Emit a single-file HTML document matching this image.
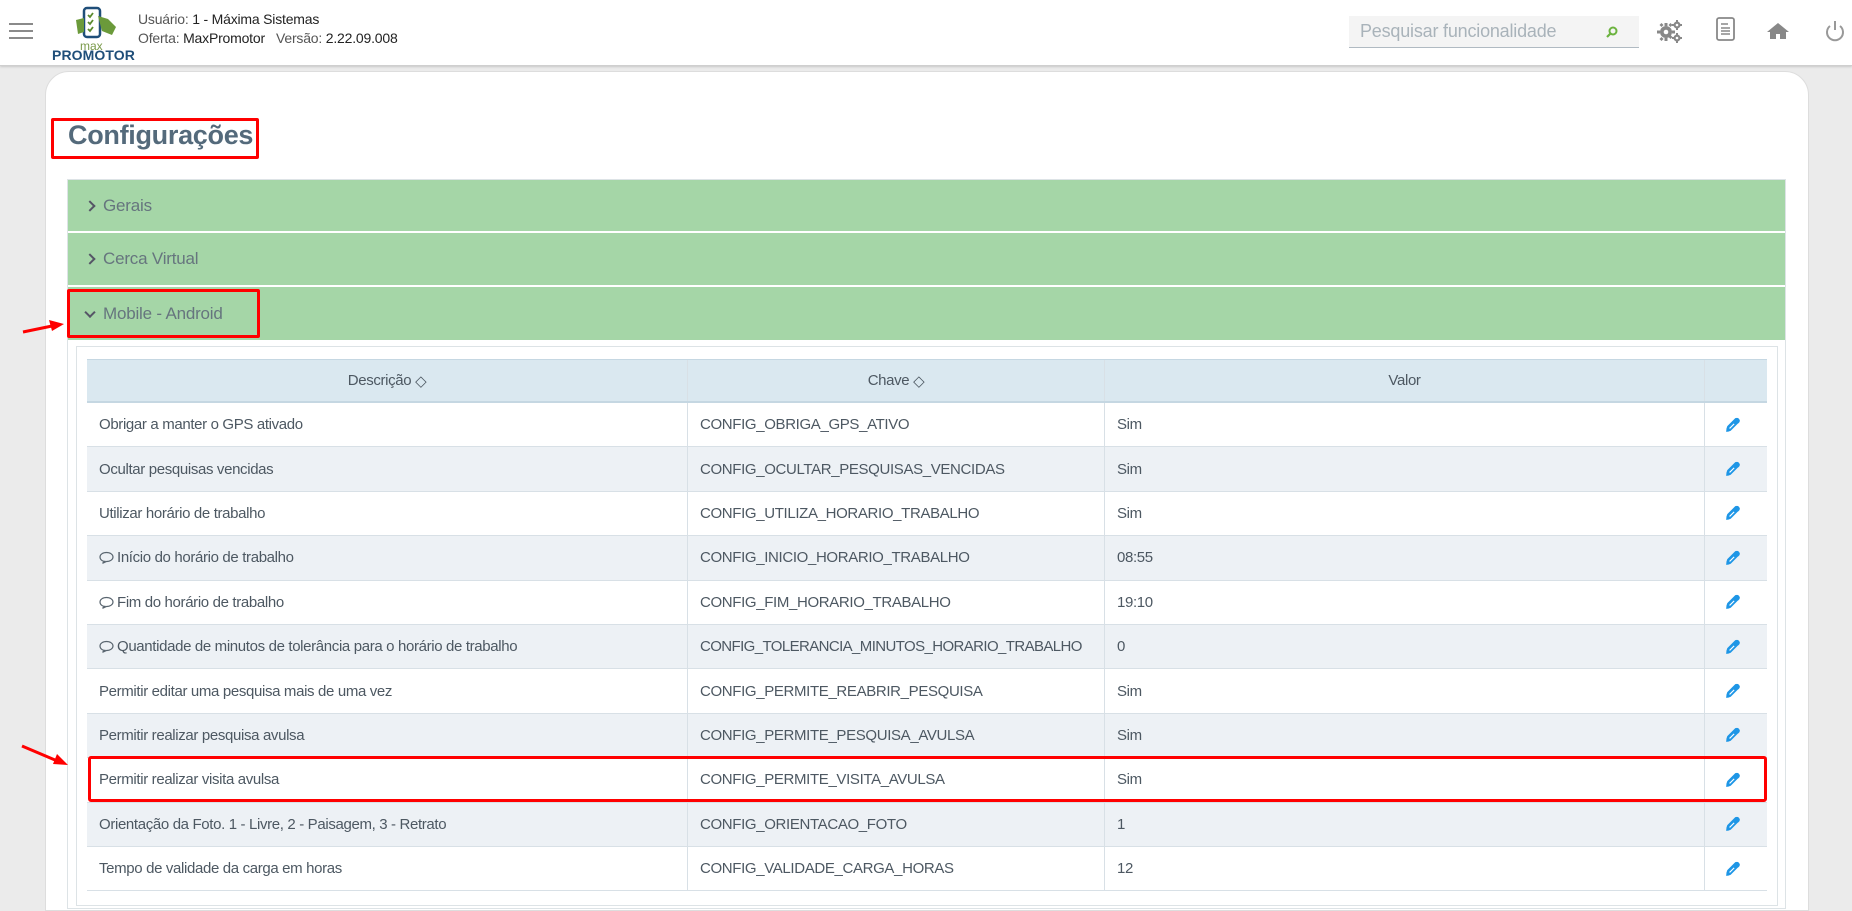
<!DOCTYPE html>
<html><head><meta charset="utf-8"><style>
*{box-sizing:border-box;margin:0;padding:0}
body{width:1852px;height:890px;overflow:hidden;background:#ebebeb;font-family:"Liberation Sans",sans-serif;position:relative;color:#4f5a63}
.abs{position:absolute}
#hdr{left:0;top:0;width:1852px;height:66px;background:#fff;border-bottom:1px solid #cfcfcf;box-shadow:0 1px 2px rgba(0,0,0,.15)}
.ham{left:9px;width:24px;height:2px;background:#8a8a8a}
.ht{font-size:14px;color:#555;left:138px;letter-spacing:-.2px}
.ht b{font-weight:normal;color:#222}
#card{left:45px;top:71px;width:1764px;height:840px;background:#fff;border-radius:24px 24px 0 0;border:1px solid #ddd}
.grow{left:68px;width:1717px;background:#a5d6a7;font-size:17px;color:#66757e;padding-left:35px;display:flex;align-items:center;letter-spacing:-.2px}
.chev{position:absolute;left:18px;top:50%;width:8px;height:8px;border-right:2px solid #556;border-bottom:2px solid #556}
.row{position:absolute;left:87px;width:1680px;height:44.4px;border-bottom:1px solid #d8e0e6;font-size:15px;letter-spacing:-.35px;color:#4d5862}
.row div{position:absolute;top:0;height:100%;display:flex;align-items:center;padding-left:12px;border-right:1px solid #d8e0e6;white-space:nowrap}
.c1{left:0;width:601px}.c2{left:601px;width:417px}.c3{left:1018px;width:600px}.c4{left:1618px;width:62px;border-right:none!important}
.odd{background:#edf1f5}
.hd{background:#dae8f0;border-bottom:2px solid #c5d7e2;color:#4d5862}
.hd div{justify-content:center;padding-left:0}
.bub{width:15px;height:13px;margin-right:3px}
.c4 svg{width:16px;height:16px;margin-left:8px}
</style></head><body>
<div id="hdr" class="abs">
<div class="abs ham" style="top:23px"></div><div class="abs ham" style="top:30px"></div><div class="abs ham" style="top:37px"></div>
<svg class="abs" style="left:68px;top:6px" width="56" height="36" viewBox="0 0 56 36"><rect x="16" y="2" width="16" height="29" rx="3" fill="none" stroke="#1f4e79" stroke-width="2.5"/><path d="M20 9l2 2 3-4M20 16l2 2 3-4M20 23l2 2 3-4" stroke="#5a8a2e" stroke-width="1.8" fill="none"/><path d="M30 10 l10 3 8 8 -4 8 -10 -4z" fill="#6b9a3a"/><path d="M8 14 l8 -2 v14 l-6 2z" fill="#6b9a3a"/></svg>
<div class="abs" style="left:80px;top:41px;font-size:12px;color:#7a9a4a;line-height:11px">max</div>
<div class="abs" style="left:52px;top:49px;font-size:14px;font-weight:bold;color:#1f4e79;line-height:13px;letter-spacing:.1px">PROMOTOR</div>
<div class="abs ht" style="top:11px">Usuário: <b>1 - Máxima Sistemas</b></div>
<div class="abs ht" style="top:30px">Oferta: <b>MaxPromotor</b> &nbsp;&nbsp;Versão: <b>2.22.09.008</b></div>
<div class="abs" style="left:1349px;top:16px;width:290px;height:32px;background:#f4f4f4;border-bottom:1px solid #b0bac2;font-size:18px;color:#a9b3ba;padding:5px 0 0 11px;letter-spacing:-.2px">Pesquisar funcionalidade</div>
<svg class="abs" style="left:1606px;top:26px" width="12" height="12"><circle cx="7" cy="5" r="3.5" fill="none" stroke="#6cb33f" stroke-width="2"/><path d="M4.5 7.5 L1 11" stroke="#6cb33f" stroke-width="2.2"/></svg>
<svg class="abs" style="left:1656px;top:19px" width="28" height="24" viewBox="0 0 28 24"><g fill="#888"><circle cx="10" cy="13" r="6"/><path d="M8.5 4h3v3h-3zM8.5 19h3v3h-3zM1 11.5h3v3H1zM16 11.5h3v3h-3zM3.5 6l2-2 2 2-2 2zM12.5 18l2-2 2 2-2 2zM3.5 20l2 2 2-2-2-2zM12.5 6l2 2 2-2-2-2z"/><circle cx="21" cy="6" r="3.5"/><circle cx="21" cy="19" r="3.5"/><path d="M20 1h2v2h-2zM20 9h2v2h-2zM16 5h2v2h-2zM24 5h2v2h-2zM20 14h2v2h-2zM20 22h2v2h-2zM16 18h2v2h-2zM24 18h2v2h-2z"/></g><circle cx="10" cy="13" r="2.3" fill="#fff"/><circle cx="21" cy="6" r="1.3" fill="#fff"/><circle cx="21" cy="19" r="1.3" fill="#fff"/></svg>
<svg class="abs" style="left:1716px;top:17px" width="20" height="24"><rect x="1" y="1" width="17" height="22" rx="2" fill="none" stroke="#888" stroke-width="1.8"/><path d="M5 7h7M5 11h9M5 14h9M5 17h9" stroke="#888" stroke-width="1.5"/></svg>
<svg class="abs" style="left:1766px;top:22px" width="24" height="18"><path d="M12 1 L23 10 H20 V17 H14 V12 H10 V17 H4 V10 H1z" fill="#888"/></svg>
<svg class="abs" style="left:1824px;top:20px" width="22" height="22"><path d="M6 6 A8 8 0 1 0 16 6" fill="none" stroke="#999" stroke-width="2"/><path d="M11 1 V10" stroke="#999" stroke-width="2"/></svg>
</div>
<div id="card" class="abs"></div>
<div class="abs" style="left:68px;top:120px;font-size:27px;font-weight:bold;color:#546a7b;letter-spacing:-.3px">Configurações</div>
<div class="abs" style="left:51px;top:118px;width:208px;height:41px;border:3px solid #f00;border-radius:2px"></div>
<div class="abs" style="left:67px;top:179px;width:1719px;height:730px;border:1px solid #dde3e6"></div>
<div class="abs grow" style="top:180px;height:51px"><span class="chev" style="transform:translateY(-50%) rotate(-45deg)"></span>Gerais</div>
<div class="abs grow" style="top:233px;height:52px"><span class="chev" style="transform:translateY(-50%) rotate(-45deg)"></span>Cerca Virtual</div>
<div class="abs grow" style="top:287px;height:53px"><span class="chev" style="transform:translateY(-70%) rotate(45deg)"></span>Mobile - Android</div>
<div class="abs" style="left:67px;top:289px;width:193px;height:49px;border:3px solid #f00;border-radius:2px"></div>
<div class="abs" style="left:76px;top:346px;width:1702px;height:560px;border:1px solid #dde3e6"></div>
<div class="row hd" style="top:359px;height:44px;border-top:1px solid #c5d7e2"><div class="c1">Descrição&nbsp;<span style="font-size:15px">◇</span></div><div class="c2">Chave&nbsp;<span style="font-size:15px">◇</span></div><div class="c3">Valor</div><div class="c4"></div></div>
<svg width="0" height="0" style="position:absolute"><defs><symbol id="b" viewBox="0 0 15 13"><path d="M7.5 1.5C3.8 1.5 1 3.5 1 6s2.2 4.2 4.5 4.4L3.5 12.3 7.5 10.5c3.7 0 6.5-2 6.5-4.5S11.2 1.5 7.5 1.5z" fill="none" stroke="#5a6670" stroke-width="1.2"/></symbol><symbol id="p" viewBox="0 0 14 14"><path d="M9 1 Q12 0 13 3 Q13 5 11 6 L5 12 Q3 13 1 13 Q1 10 2 8z" fill="#1e96e6"/><path d="M4 10l4-4" stroke="#fff" stroke-width="1"/></symbol></defs></svg>
<div class="row" style="top:403px"><div class="c1">Obrigar a manter o GPS ativado</div><div class="c2">CONFIG_OBRIGA_GPS_ATIVO</div><div class="c3">Sim</div><div class="c4"><svg><use href="#p"/></svg></div></div>
<div class="row odd" style="top:447.4px"><div class="c1">Ocultar pesquisas vencidas</div><div class="c2">CONFIG_OCULTAR_PESQUISAS_VENCIDAS</div><div class="c3">Sim</div><div class="c4"><svg><use href="#p"/></svg></div></div>
<div class="row" style="top:491.8px"><div class="c1">Utilizar horário de trabalho</div><div class="c2">CONFIG_UTILIZA_HORARIO_TRABALHO</div><div class="c3">Sim</div><div class="c4"><svg><use href="#p"/></svg></div></div>
<div class="row odd" style="top:536.2px"><div class="c1"><svg class="bub"><use href="#b"/></svg>Início do horário de trabalho</div><div class="c2">CONFIG_INICIO_HORARIO_TRABALHO</div><div class="c3">08:55</div><div class="c4"><svg><use href="#p"/></svg></div></div>
<div class="row" style="top:580.6px"><div class="c1"><svg class="bub"><use href="#b"/></svg>Fim do horário de trabalho</div><div class="c2">CONFIG_FIM_HORARIO_TRABALHO</div><div class="c3">19:10</div><div class="c4"><svg><use href="#p"/></svg></div></div>
<div class="row odd" style="top:625px"><div class="c1"><svg class="bub"><use href="#b"/></svg>Quantidade de minutos de tolerância para o horário de trabalho</div><div class="c2" style="letter-spacing:-.6px">CONFIG_TOLERANCIA_MINUTOS_HORARIO_TRABALHO</div><div class="c3">0</div><div class="c4"><svg><use href="#p"/></svg></div></div>
<div class="row" style="top:669.4px"><div class="c1">Permitir editar uma pesquisa mais de uma vez</div><div class="c2">CONFIG_PERMITE_REABRIR_PESQUISA</div><div class="c3">Sim</div><div class="c4"><svg><use href="#p"/></svg></div></div>
<div class="row odd" style="top:713.8px"><div class="c1">Permitir realizar pesquisa avulsa</div><div class="c2">CONFIG_PERMITE_PESQUISA_AVULSA</div><div class="c3">Sim</div><div class="c4"><svg><use href="#p"/></svg></div></div>
<div class="row" style="top:758.2px"><div class="c1">Permitir realizar visita avulsa</div><div class="c2">CONFIG_PERMITE_VISITA_AVULSA</div><div class="c3">Sim</div><div class="c4"><svg><use href="#p"/></svg></div></div>
<div class="row odd" style="top:802.6px"><div class="c1">Orientação da Foto. 1 - Livre, 2 - Paisagem, 3 - Retrato</div><div class="c2">CONFIG_ORIENTACAO_FOTO</div><div class="c3">1</div><div class="c4"><svg><use href="#p"/></svg></div></div>
<div class="row" style="top:847px"><div class="c1">Tempo de validade da carga em horas</div><div class="c2">CONFIG_VALIDADE_CARGA_HORAS</div><div class="c3">12</div><div class="c4"><svg><use href="#p"/></svg></div></div>
<div class="abs" style="left:88px;top:756px;width:1679px;height:46px;border:3px solid #f00;border-radius:3px"></div>
<svg class="abs" style="left:0;top:0" width="100" height="800"><path d="M23 332 L52 326" stroke="#f00" stroke-width="3"/><path d="M64 324 L49 320 L52 331z" fill="#f00"/><path d="M22 746 L55 760" stroke="#f00" stroke-width="3"/><path d="M68 765 L57 754 L53 764z" fill="#f00"/></svg>
</body></html>
